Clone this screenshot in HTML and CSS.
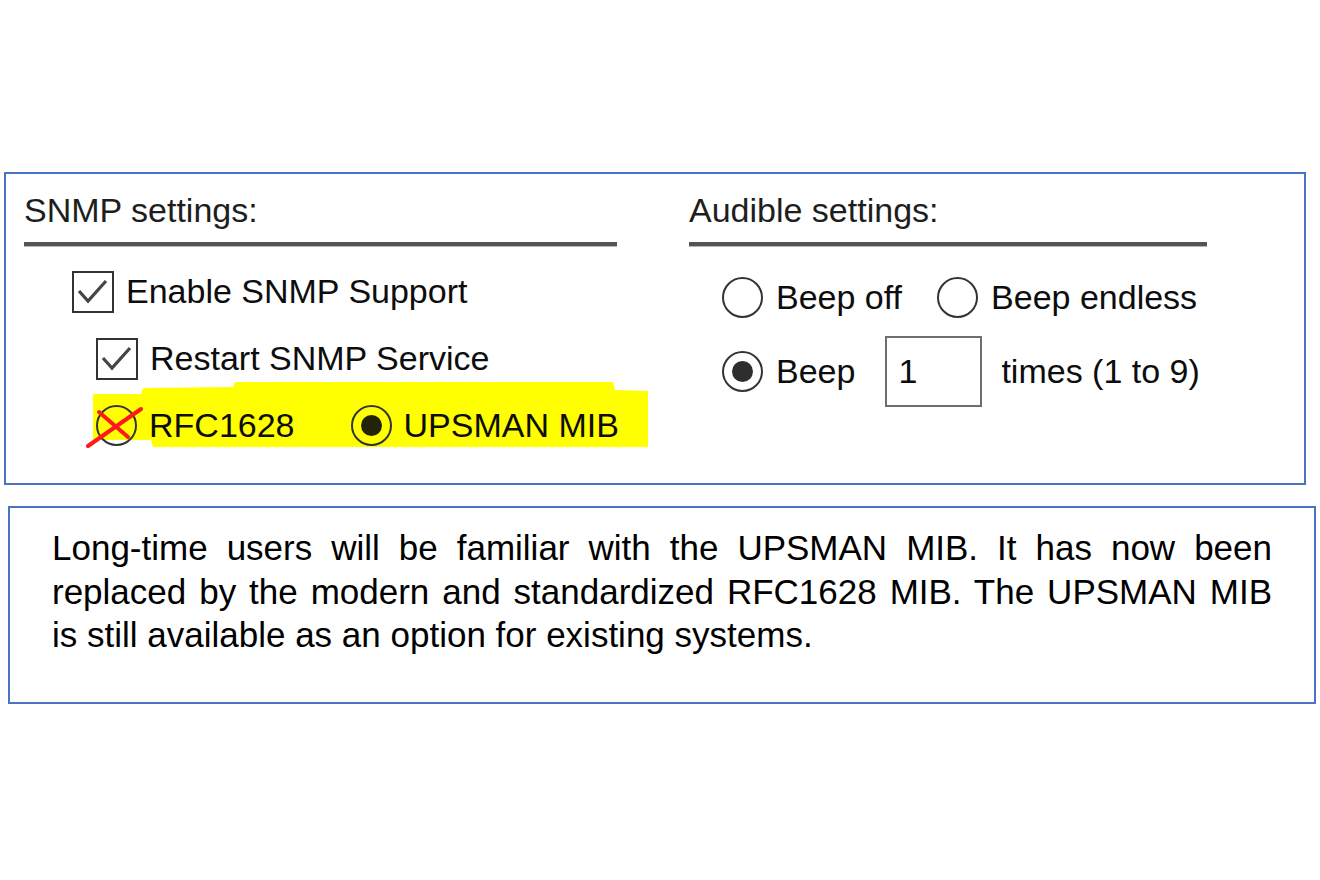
FILE: index.html
```html
<!DOCTYPE html>
<html lang="en">
<head>
    <meta charset="UTF-8">
    <meta name="viewport" content="width=device-width, initial-scale=1.0">
    <title>SNMP and Audible settings</title>
    <link rel="stylesheet" href="styles.css">
</head>
<body>

<div class="panel">
    <div class="group group-snmp">
        <div class="group-title">SNMP settings:</div>
        <div class="options">
            <div class="option-row indent-1">
                <span class="check">
                    <svg viewBox="0 0 38 38" width="38" height="38"><polyline points="5,18 14,28 32,8" fill="none" stroke="#454545" stroke-width="3.2"/></svg>
                </span>
                <span>Enable SNMP Support</span>
            </div>
            <div class="option-row indent-2">
                <span class="check">
                    <svg viewBox="0 0 38 38" width="38" height="38"><polyline points="5,18 14,28 32,8" fill="none" stroke="#454545" stroke-width="3.2"/></svg>
                </span>
                <span>Restart SNMP Service</span>
            </div>
            <div class="option-row mib-row">
                <span class="radio">
                    <svg class="cross" viewBox="0 0 58 50" width="58" height="50">
                        <line x1="2" y1="45" x2="55" y2="8" stroke="#ff1a1a" stroke-width="4" stroke-linecap="round"/>
                        <line x1="13" y1="11" x2="42" y2="36" stroke="#ff1a1a" stroke-width="4" stroke-linecap="round"/>
                    </svg>
                </span>
                <span>RFC1628</span>
                <span class="radio on second"></span>
                <span>UPSMAN MIB</span>
            </div>
        </div>
    </div>

    <div class="group group-audible">
        <div class="group-title">Audible settings:</div>
        <div class="options audible">
            <div class="option-row">
                <span class="radio"></span>
                <span>Beep off</span>
                <span class="radio second"></span>
                <span>Beep endless</span>
            </div>
            <div class="option-row">
                <span class="radio on"></span>
                <span>Beep</span>
                <span class="count">1</span>
                <span class="count-label">times (1 to 9)</span>
            </div>
        </div>
    </div>
</div>

<div class="note">
    <span class="note-line">Long-time users will be familiar with the UPSMAN MIB. It has now been</span>
    <span class="note-line">replaced by the modern and standardized RFC1628 MIB. The UPSMAN MIB</span>
    <span class="note-line last">is still available as an option for existing systems.</span>
</div>

</body>
</html>
```

FILE: styles.css
```css
body {
    margin: 0;
    background: #fff;
    font-family: "Liberation Sans", Arial, sans-serif;
    color: #0d0d0d;
    padding-top: 172px;
}
.panel {
    margin-left: 4px;
    width: 1302px;
    height: 313px;
    box-sizing: border-box;
    border: 2px solid #4a73c4;
    padding: 16px 0 0 18px;
    display: flex;
    gap: 72px;
}
.group-snmp {
    width: 593px;
}
.group-audible {
    width: 518px;
}
.group-title {
    font-size: 34px;
    line-height: 40px;
    padding-bottom: 12px;
    border-bottom: 4px solid #555;
    box-shadow: 0 1px 0 #b5b5b5;
    color: #1e1e1e;
}
.options {
    margin-top: 12px;
    font-size: 34px;
}
.option-row {
    height: 67px;
    display: flex;
    align-items: center;
    white-space: nowrap;
}
.indent-1 {
    padding-left: 48px;
}
.indent-2 {
    padding-left: 72px;
}
.check {
    width: 42px;
    height: 42px;
    box-sizing: border-box;
    border: 2px solid #333;
    margin-right: 12px;
    display: flex;
}
.radio {
    width: 41px;
    height: 41px;
    box-sizing: border-box;
    border: 2px solid #333;
    border-radius: 50%;
    margin-right: 12px;
    position: relative;
    display: flex;
    align-items: center;
    justify-content: center;
    flex-shrink: 0;
}
.radio.on::after {
    content: "";
    width: 21px;
    height: 21px;
    border-radius: 50%;
    background: #2e2e2e;
}
.radio.second {
    margin-left: 56px;
}
.cross {
    position: absolute;
    left: -12px;
    top: -6px;
}

/* highlighted MIB choice */
.mib-row {
    position: relative;
    z-index: 0;
    margin: -10px 0 0 69px;
    width: 555px;
    height: 65px;
    box-sizing: border-box;
    padding: 21px 0 0 3px;
}
.mib-row::before {
    content: "";
    position: absolute;
    inset: 0;
    z-index: -1;
    background: #ffff00;
    clip-path: polygon(0 12px, 48px 12px, 50px 6px, 140px 5px, 142px 0, 520px 0, 522px 8px, 555px 9px, 555px 65px, 60px 65px, 58px 58px, 0 58px);
}
.mib-row .radio.on::after {
    background: #23230a;
}

.audible {
    margin-top: 14px;
}
.audible .option-row {
    height: 74px;
    padding-left: 33px;
}
.audible .radio {
    margin-right: 13px;
}
.audible .radio.second {
    margin-left: 35px;
}
.count {
    width: 97px;
    height: 71px;
    box-sizing: border-box;
    border: 2px solid #6e6e6e;
    margin-left: 30px;
    padding-left: 11px;
    display: flex;
    align-items: center;
}
.count-label {
    margin-left: 19px;
}

.note {
    margin: 21px 0 0 8px;
    width: 1308px;
    height: 198px;
    box-sizing: border-box;
    border: 2px solid #4a73c4;
    padding: 18px 42px 0;
    font-size: 35px;
    line-height: 43.5px;
    color: #000;
}
.note-line {
    display: block;
    text-align: justify;
    text-align-last: justify;
}
.note-line.last {
    text-align-last: left;
}
```
